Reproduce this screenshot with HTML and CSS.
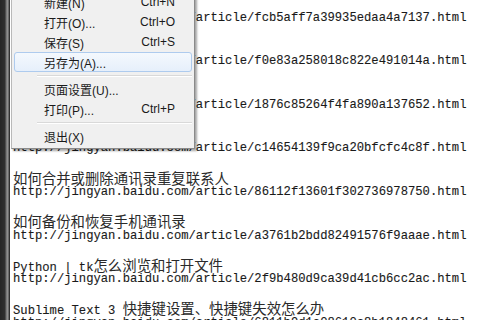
FILE: index.html
```html
<!DOCTYPE html>
<html>
<head>
<meta charset="utf-8">
<link rel="stylesheet" href="styles.css">
</head>
<body>
<div class="screen">
  <div class="sidebar"></div>
  <div class="doc">
    <div class="lines">
      <div class="item"><div class="title"><span class="cj">如何设置手机通讯录</span></div><div class="url">http://jingyan.baidu.com/article/fcb5aff7a39935edaa4a7137.html</div></div>
      <div class="item"><div class="title"><span class="cj">如何导出通讯录</span></div><div class="url">http://jingyan.baidu.com/article/f0e83a258018c822e491014a.html</div></div>
      <div class="item"><div class="title"><span class="cj">如何同步联系人</span></div><div class="url">http://jingyan.baidu.com/article/1876c85264f4fa890a137652.html</div></div>
      <div class="item"><div class="title"><span class="cj">如何恢复联系人</span></div><div class="url">http://jingyan.baidu.com/article/c14654139f9ca20bfcfc4c8f.html</div></div>
      <div class="item"><div class="title"><span class="cj">如何合并或删除通讯录重复联系人</span></div><div class="url">http://jingyan.baidu.com/article/86112f13601f302736978750.html</div></div>
      <div class="item"><div class="title"><span class="cj">如何备份和恢复手机通讯录</span></div><div class="url">http://jingyan.baidu.com/article/a3761b2bdd82491576f9aaae.html</div></div>
      <div class="item"><div class="title">Python | tk<span class="cj">怎么浏览和打开文件</span></div><div class="url">http://jingyan.baidu.com/article/2f9b480d9ca39d41cb6cc2ac.html</div></div>
      <div class="item"><div class="title">Sublime Text 3 <span class="cj">快捷键设置、快捷键失效怎么办</span></div><div class="url">http://jingyan.baidu.com/article/6811b9d1a08610c8b1848461.html</div></div>
    </div>
    <div class="menu">
      <div class="mi"><span>新建(N)</span><span>Ctrl+N</span></div>
      <div class="mi"><span>打开(O)...</span><span>Ctrl+O</span></div>
      <div class="mi"><span>保存(S)</span><span>Ctrl+S</span></div>
      <div class="mi hot"><span>另存为(A)...</span><span></span></div>
      <div class="sep"></div>
      <div class="mi"><span>页面设置(U)...</span><span></span></div>
      <div class="mi"><span>打印(P)...</span><span>Ctrl+P</span></div>
      <div class="sep"></div>
      <div class="mi"><span>退出(X)</span><span></span></div>
    </div>
  </div>
</div>
</body>
</html>
```

FILE: styles.css
```css
html, body {
  margin: 0;
  padding: 0;
  width: 480px;
  height: 320px;
  overflow: hidden;
  background: #fff;
}
.screen {
  display: flex;
  width: 480px;
  height: 320px;
}
.sidebar {
  width: 10px;
  flex: none;
  background: linear-gradient(to right, #262626 0, #303030 5px, #6d6d6d 6px, #9a9a9a 8px, #3a3a3a 9px, #2a2a2a 10px);
}
.doc {
  flex: 1;
  position: relative;
  overflow: hidden;
  background: #fff;
}
.lines {
  margin-top: -4px;
  padding-left: 3px;
  font-family: "Liberation Mono", monospace;
  font-size: 12.2px;
  line-height: 14.55px;
  color: #1a1a1a;
}
.item {
  padding-bottom: 14.55px;
}
.title, .url {
  height: 14.55px;
  white-space: pre;
  -webkit-text-stroke: 0.12px #1a1a1a;
}
.cj {
  font-family: "Noto Sans CJK SC", sans-serif;
  font-size: 14.4px;
  line-height: 14.55px;
  color: #2a2a2a;
  -webkit-text-stroke: 0;
}
.menu {
  position: absolute;
  left: 1px;
  top: -11px;
  width: 182px;
  padding: 2px 0;
  background: #f0f0f0;
  border: 1px solid #b9b9b9;
  border-right-color: #8a8a8a;
  border-bottom-color: #8a8a8a;
  box-shadow: 2px 2px 2px rgba(0, 0, 0, 0.35);
  font-family: "Liberation Sans", "Noto Sans CJK SC", sans-serif;
  font-size: 12px;
  color: #1a1a1a;
}
.mi {
  height: 20px;
  margin: 0 2px;
  padding: 0 16px 0 29px;
  display: flex;
  align-items: center;
  justify-content: space-between;
  box-sizing: border-box;
  border: 1px solid transparent;
  border-radius: 3px;
}
.mi.hot {
  border-color: #aecbee;
  background: linear-gradient(#f4f8fd, #e6effb);
}
.sep {
  height: 7px;
  margin-left: 25px;
  margin-right: 2px;
  position: relative;
}
.sep::before {
  content: "";
  position: absolute;
  left: 0;
  right: 0;
  top: 3px;
  height: 1px;
  background: #d9d9d9;
  border-bottom: 1px solid #ffffff;
}
```
